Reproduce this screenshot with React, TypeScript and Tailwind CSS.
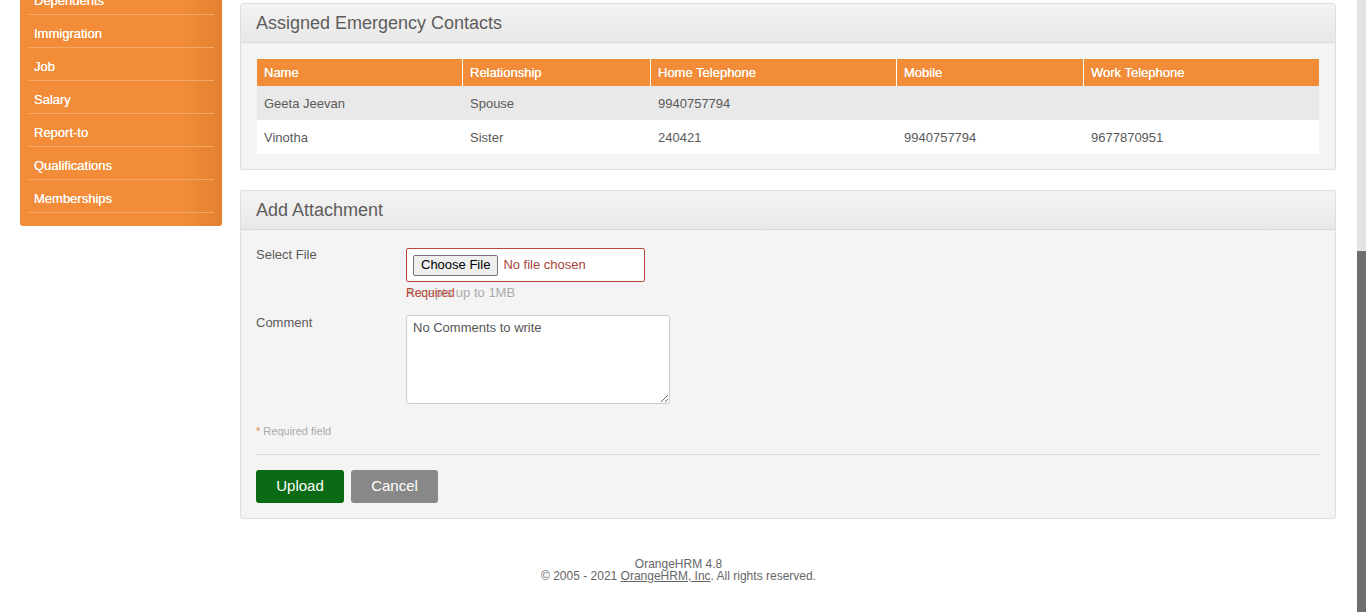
import React from "react";

const F = { fontFamily: '"Liberation Sans", Arial, sans-serif' };

const menu = ["Dependents", "Immigration", "Job", "Salary", "Report-to", "Qualifications", "Memberships"];

const cols = ["Name", "Relationship", "Home Telephone", "Mobile", "Work Telephone"];
const rows = [
  ["Geeta Jeevan", "Spouse", "9940757794", "", ""],
  ["Vinotha", "Sister", "240421", "9940757794", "9677870951"],
];

function Panel({ title, children }: { title: string; children: React.ReactNode }) {
  return (
    <div className="border border-[#dedede] rounded-[3px] bg-[#f4f4f4]">
      <div className="h-[39px] flex items-center px-[15px] border-b border-[#dadada] bg-gradient-to-b from-[#f4f4f4] to-[#e8e8e8] rounded-t-[3px]">
        <h1 className="text-[18px] text-[#5d5d5d] font-normal leading-none">{title}</h1>
      </div>
      {children}
    </div>
  );
}

export default function App() {
  return (
    <div style={F} className="flex h-[612px] overflow-hidden bg-white">
      <div className="flex-1 flex flex-col min-w-0">
        <div className="flex items-start pl-[20px] pr-[21px] gap-[18px]">
          <div className="w-[202px] shrink-0 mt-[-18px] rounded-b-[3px] bg-gradient-to-r from-[#f28c38] from-[80%] to-[#e2812f] pb-[13px]">
            {menu.map((m) => (
              <div key={m} className="mx-[8px] h-[33px] border-b border-[#f5a766] flex items-center pt-[6px] pl-[6px] text-white text-[13px] font-normal [text-shadow:0_0_0.4px_#fff]">
                {m}
              </div>
            ))}
          </div>
          <div className="flex-1 flex flex-col pt-[3px] gap-[20px]">
            <Panel title="Assigned Emergency Contacts">
              <div className="px-[16px] pt-[16px] pb-[15px]">
                <div className="grid grid-cols-[206px_188px_246px_187px_1fr]">
                  {cols.map((c, i) => (
                    <div key={c} className={`h-[27px] bg-[#f28c38] text-white text-[13px] [text-shadow:0_0_0.4px_#fff] flex items-center px-[7px] ${i < 4 ? "border-r border-white" : ""}`}>
                      {c}
                    </div>
                  ))}
                  {rows.map((r, ri) =>
                    r.map((v, ci) => (
                      <div key={ri + "-" + ci} className={`h-[34px] flex items-center pt-[2px] px-[7px] text-[13px] text-[#5a5a5a] ${ri === 0 ? "bg-[#e9e9e9]" : "bg-white"}`}>
                        {v}
                      </div>
                    ))
                  )}
                </div>
              </div>
            </Panel>
            <Panel title="Add Attachment">
              <div className="px-[15px] pt-[18px] pb-[15px]">
                <div className="flex">
                  <div className="w-[150px] text-[13px] leading-[16px] text-[#5a5a5a] mt-[-1px]">Select File</div>
                  <div>
                    <div className="w-[239px] h-[34px] bg-white border border-[#b9483a] rounded-[2px] flex items-center pl-[6px]">
                      <span className="h-[21px] px-[7px] border border-[#767676] rounded-[2px] bg-[#efefef] text-[13px] text-black flex items-center">Choose File</span>
                      <span className="ml-[5px] text-[13px] text-[#a8443a]">No file chosen</span>
                    </div>
                    <div className="relative h-[16px] mt-[3px] text-[13px] leading-[16px]">
                      <span className="block text-[13px] text-[#aaaaaa] leading-[16px]">Accepts up to 1MB</span>
                      <span className="absolute left-0 top-0 text-[12px] text-[#bf4a3a] leading-[16px]">Required</span>
                    </div>
                  </div>
                </div>
                <div className="flex mt-[14px]">
                  <div className="w-[150px] text-[13px] leading-[16px] text-[#5a5a5a]">Comment</div>
                  <textarea
                    readOnly
                    defaultValue="No Comments to write"
                    className="w-[264px] h-[89px] bg-white border border-[#cccccc] rounded-[3px] px-[6px] pt-[4px] text-[13px] leading-[16px] text-[#555] outline-none"
                    style={F}
                  />
                </div>
                <div className="mt-[19px] text-[11px] text-[#aaaaaa]">
                  <span className="text-[#e08a4f]">*</span> Required field
                </div>
                <div className="mt-[14px] border-t border-[#dddddd]" />
                <div className="flex gap-[7px] mt-[15px]">
                  <button className="w-[88px] h-[33px] rounded-[3px] bg-[#0a6b14] text-white text-[15px]" style={F}>Upload</button>
                  <button className="w-[87px] h-[33px] rounded-[3px] bg-[#888888] text-white text-[15px]" style={F}>Cancel</button>
                </div>
              </div>
            </Panel>
          </div>
        </div>
        <div className="mt-[39px] text-center text-[12px] leading-[12px] text-[#666666]">
          <div>OrangeHRM 4.8</div>
          <div>
            © 2005 - 2021 <span className="underline">OrangeHRM, Inc</span>. All rights reserved.
          </div>
        </div>
      </div>
      <div className="w-[9px] shrink-0 flex flex-col">
        <div className="h-[251px] bg-[#e3e3e3]" />
        <div className="flex-1 bg-[#6e6e6e]" />
      </div>
    </div>
  );
}
